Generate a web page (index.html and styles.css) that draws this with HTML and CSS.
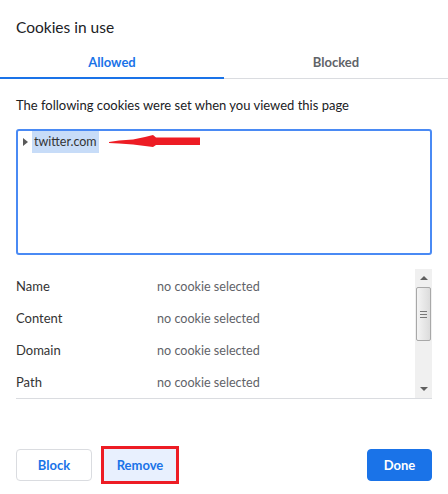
FILE: index.html
```html
<!DOCTYPE html>
<html lang="en">
<head>
  <meta charset="UTF-8" />
  <title>Cookies in use</title>
  <link rel="stylesheet" href="styles.css">
</head>
<body>
  <div class="dialogo">
    <h2 class="titulo">Cookies in use</h2>

    <div class="pestanas">
      <div class="pestana activa">Allowed</div>
      <div class="pestana">Blocked</div>
    </div>

    <div class="contenido">
      <p class="descripcion">The following cookies were set when you viewed this page</p>

      <div class="arbol">
        <div class="nodo">
          <span class="flecha"></span>
          <span class="sitio">twitter.com</span>
        </div>
        <!-- marca roja de la captura -->
        <svg class="marca" width="94" height="14" viewBox="0 0 94 14">
          <polygon fill="#ed1c24" points="0,7 10,5.5 24,4.5 36,2 44,0 47,2.5 91,2.5 91,10 47,10 44,12 36,11 24,9.5 10,8.5 0,8"/>
        </svg>
      </div>

      <div class="detalles">
        <div class="filas">
          <div class="fila"><span class="campo">Name</span><span class="valor">no cookie selected</span></div>
          <div class="fila"><span class="campo">Content</span><span class="valor">no cookie selected</span></div>
          <div class="fila"><span class="campo">Domain</span><span class="valor">no cookie selected</span></div>
          <div class="fila"><span class="campo">Path</span><span class="valor">no cookie selected</span></div>
        </div>
        <div class="barra">
          <div class="boton-barra"><span class="tri-arriba"></span></div>
          <div class="pulgar"><span class="agarre"></span></div>
          <div class="pista"></div>
          <div class="boton-barra"><span class="tri-abajo"></span></div>
        </div>
      </div>
    </div>

    <div class="acciones">
      <button class="btn">Block</button>
      <button class="btn btn-marcado">Remove</button>
      <button class="btn btn-primario">Done</button>
    </div>
  </div>
</body>
</html>
```

FILE: styles.css
```css
body {
  margin: 0;
  font-family: 'Segoe UI', Lato, sans-serif;
  font-size: 13px;
  color: #333;
  background: white;
}

.dialogo {
  width: 448px;
  height: 494px;
  display: flex;
  flex-direction: column;
}

.titulo {
  font-size: 15.5px;
  font-weight: normal;
  color: #202124;
  margin: 0;
  padding: 16px 16px 0;
  line-height: 22px;
}

.pestanas {
  display: flex;
  margin-top: 9px;
  border-bottom: 1px solid #dadce0;
}

.pestana {
  flex: 1;
  text-align: center;
  font-weight: bold;
  color: #5f6368;
  line-height: 18px;
  padding: 6px 0 6px;
  border-bottom: 2px solid transparent;
  margin-bottom: -1px;
}

.pestana.activa {
  color: #1a73e8;
  border-bottom-color: #1a73e8;
}

.contenido {
  padding: 0 16px;
}

.descripcion {
  margin: 17px 0 0;
  line-height: 18px;
  color: #202124;
}

.arbol {
  position: relative;
  margin-top: 15px;
  height: 122px;
  border: 2px solid #4a8af4;
  border-radius: 3px;
}

.nodo {
  display: flex;
  align-items: center;
  padding: 0 0 0 5px;
}

.flecha {
  width: 0;
  height: 0;
  border-top: 4px solid transparent;
  border-bottom: 4px solid transparent;
  border-left: 5px solid #5a5a5a;
  margin-right: 4px;
}

.sitio {
  background: #c7dcf8;
  padding: 0 2px;
  line-height: 22px;
  font-size: 12.5px;
  color: #333;
}

.marca {
  position: absolute;
  left: 91px;
  top: 4px;
}

.detalles {
  display: flex;
  margin-top: 14px;
  height: 129px;
  border-bottom: 1px solid #dadce0;
}

.filas {
  flex: 1;
  overflow: hidden;
}

.fila {
  display: flex;
  box-sizing: border-box;
  height: 32px;
  align-items: center;
  padding-top: 2px;
}

.campo {
  width: 141px;
  color: #333;
}

.valor {
  color: #5f6368;
  font-size: 12.6px;
}

.barra {
  width: 17px;
  background: #f0f0f0;
  display: flex;
  flex-direction: column;
}

.boton-barra {
  height: 18px;
  display: flex;
  align-items: center;
  justify-content: center;
}

.tri-arriba {
  border-left: 4px solid transparent;
  border-right: 4px solid transparent;
  border-bottom: 4px solid #606060;
}

.tri-abajo {
  border-left: 4px solid transparent;
  border-right: 4px solid transparent;
  border-top: 4px solid #606060;
}

.pulgar {
  height: 52px;
  margin: 0 1px;
  border: 1px solid #a8a8a8;
  border-radius: 2px;
  background: linear-gradient(to right, #f4f4f4, #dcdcdc);
  display: flex;
  align-items: center;
  justify-content: center;
}

.agarre {
  width: 7px;
  height: 5px;
  border-top: 1px solid #777;
  border-bottom: 1px solid #777;
  background: linear-gradient(#777, #777) center / 7px 1px no-repeat;
}

.pista {
  flex: 1;
}

.acciones {
  display: flex;
  align-items: center;
  margin-top: auto;
  padding: 0 16px 10px;
  gap: 9px;
}

.btn {
  font-family: inherit;
  font-size: 13px;
  font-weight: bold;
  color: #1a73e8;
  background: white;
  border: 1px solid #dadce0;
  border-radius: 4px;
  height: 32px;
  width: 76px;
  cursor: pointer;
}

.btn-marcado {
  width: 78px;
  height: 38px;
  background: #e8f0fe;
  border: 3px solid #ed1c24;
  border-radius: 0;
}

.btn-primario {
  margin-left: auto;
  width: 65px;
  background: #1a73e8;
  border-color: #1a73e8;
  color: white;
}
```
